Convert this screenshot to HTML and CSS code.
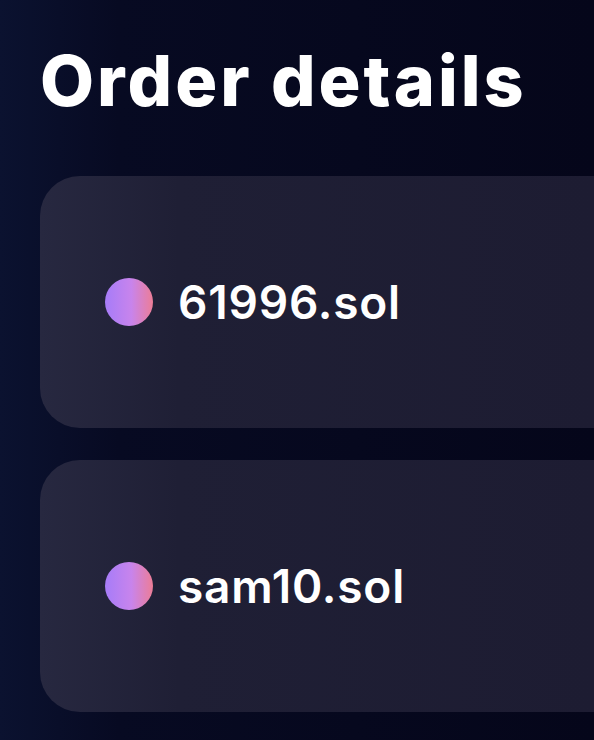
FILE: index.html
```html
<!DOCTYPE html>
<html lang="en">

<head>
    <meta charset="UTF-8">
    <meta name="viewport" content="width=device-width, initial-scale=1.0">
    <title>Order details</title>
    <link rel="stylesheet" href="styles.css">
</head>

<body>
    <h1>Order details</h1>
    <div class="list">
        <div class="item">
            <span class="dot"></span>
            <span class="name">61996.sol</span>
        </div>
        <div class="item">
            <span class="dot"></span>
            <span class="name">sam10.sol</span>
        </div>
    </div>
</body>

</html>
```

FILE: styles.css
```css
* {
    margin: 0;
    padding: 0;
    box-sizing: border-box;
}

html,
body {
    height: 100%;
}

body {
    background: linear-gradient(90deg, #0b1230 0%, #070a22 20%, #05061a 100%);
    font-family: 'Inter', 'Noto Sans', sans-serif;
    color: #ffffff;
    padding: 46px 0 0 40px;
    overflow: hidden;
}

h1 {
    font-size: 70px;
    font-weight: 800;
    line-height: 1;
    letter-spacing: 3px;
}

.list {
    display: flex;
    flex-direction: column;
    gap: 32px;
    margin-top: 60px;
}

.item {
    height: 252px;
    border-radius: 40px 0 0 40px;
    background: linear-gradient(90deg, #272840 0%, #1f1f35 25%, #1d1c32 100%);
    display: flex;
    align-items: center;
    padding-left: 65px;
    gap: 25px;
}

.dot {
    width: 48px;
    height: 48px;
    border-radius: 50%;
    background: linear-gradient(90deg, #a67cf8 0%, #c884ec 55%, #ec7d96 100%);
    flex-shrink: 0;
}

.name {
    font-size: 46px;
    font-weight: 600;
    letter-spacing: 0.8px;
}
```
